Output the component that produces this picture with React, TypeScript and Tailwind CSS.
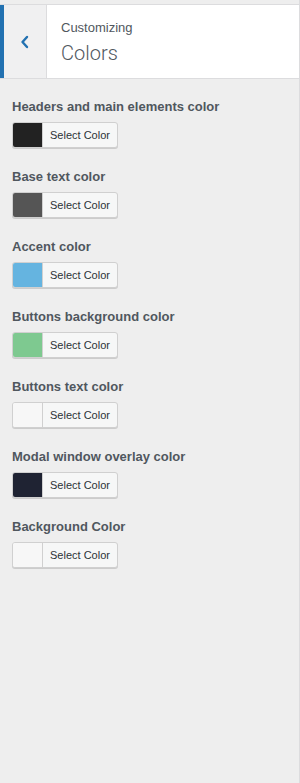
const colors = [
  { label: "Headers and main elements color", value: "#222222" },
  { label: "Base text color", value: "#555555" },
  { label: "Accent color", value: "#65b4e0" },
  { label: "Buttons background color", value: "#7ec990" },
  { label: "Buttons text color", value: "#f7f7f7" },
  { label: "Modal window overlay color", value: "#1f2333" },
  { label: "Background Color", value: "#f7f7f7" },
];

function ColorControl({ label, value }: { label: string; value: string }) {
  return (
    <li className="mb-[20px]">
      <span className="block text-[13px] font-bold leading-[18px] text-[#50575e]">{label}</span>
      <button className="mt-[6px] flex h-[26px] items-stretch overflow-hidden rounded-[3px] border border-[#d0d0d0] bg-[#f6f7f7] shadow-[0_1px_0_#ccc]">
        <span className="w-[30px] border-r border-[#d0d0d0]" style={{ backgroundColor: value }} />
        <span className="flex items-center px-[7px] text-[11px] text-[#2c3338]">Select Color</span>
      </button>
    </li>
  );
}

export default function App() {
  return (
    <div
      className="flex h-[783px] w-[300px] flex-col border-r border-[#dcdcde] bg-[#eeeeee]"
      style={{ fontFamily: '"Liberation Sans", Arial, sans-serif' }}
    >
      <div className="mt-[4px] flex h-[75px] border-y border-[#dcdcde] bg-white">
        <button className="flex w-[47px] items-center justify-center border-l-4 border-r border-l-[#2271b1] border-r-[#dcdcde] bg-[#f0f0f1] text-[#2271b1]">
          <svg width="12" height="14" viewBox="0 0 12 14" fill="none">
            <path d="M8 2 L3.5 7 L8 12" stroke="currentColor" strokeWidth="2.4" strokeLinecap="round" strokeLinejoin="round" />
          </svg>
        </button>
        <div className="flex flex-col pl-[14px] pt-[14px]">
          <span className="text-[13px] leading-[18px] text-[#50575e]">Customizing</span>
          <span className="mt-[3px] text-[20px] font-light leading-[26px] text-[#50575e]" style={{ fontFamily: "Roboto, sans-serif", fontWeight: 300 }}>
            Colors
          </span>
        </div>
      </div>
      <ul className="px-[12px] pt-[19px]">
        {colors.map((c) => (
          <ColorControl key={c.label} label={c.label} value={c.value} />
        ))}
      </ul>
    </div>
  );
}
